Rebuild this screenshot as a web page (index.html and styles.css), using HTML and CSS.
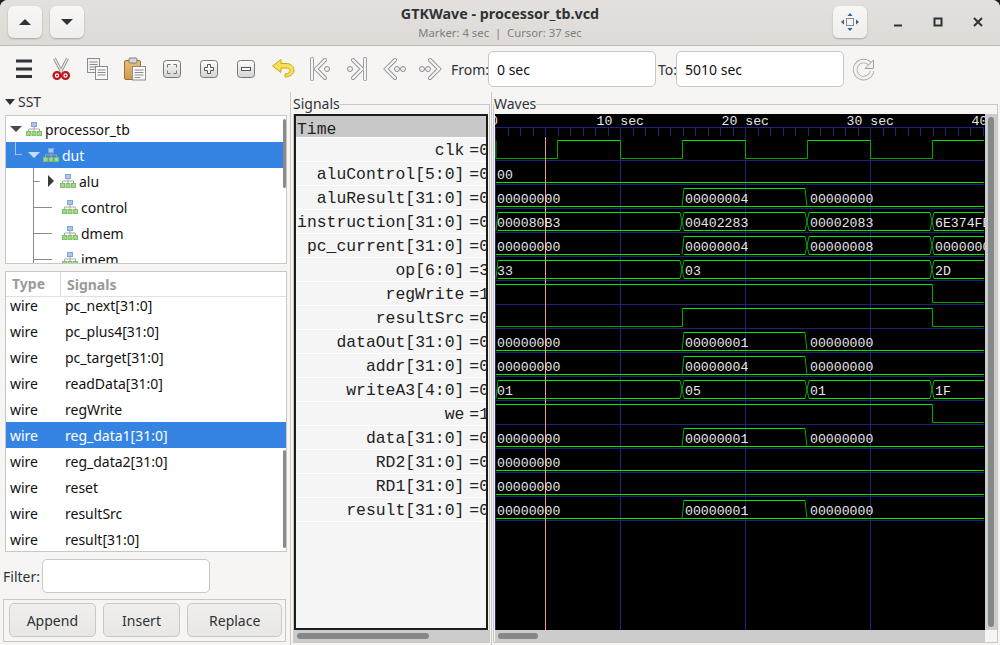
FILE: index.html
```html
<!DOCTYPE html>
<html lang="en">

<head>
  <meta charset="UTF-8">
  <meta name="viewport" content="width=device-width">
  <title>GTKWave - processor_tb.vcd</title>
  <link rel="stylesheet" href="styles.css">
</head>

<body>

  <svg class="defs" width="0" height="0">
    <symbol id="hier" viewBox="0 0 16 14">
      <path d="M8 4v3M2.5 10V7h11v3M8 7v3" fill="none" stroke="#a8a8a8"/>
      <rect x="5.5" y="0.5" width="5" height="4" fill="#a9c8ec" stroke="#7fa6d6"/>
      <rect x="0.5" y="9.5" width="4" height="4" fill="#a5d78e" stroke="#7fbf65"/>
      <rect x="6" y="9.5" width="4" height="4" fill="#a5d78e" stroke="#7fbf65"/>
      <rect x="11.5" y="9.5" width="4" height="4" fill="#a5d78e" stroke="#7fbf65"/>
    </symbol>
    <linearGradient id="btnface" x1="0" y1="0" x2="0" y2="1">
      <stop offset="0" stop-color="#fdfdfd"/>
      <stop offset="1" stop-color="#d4d4d2"/>
    </linearGradient>
    <linearGradient id="clip" x1="0" y1="0" x2="0" y2="1">
      <stop offset="0" stop-color="#e8bd78"/>
      <stop offset="1" stop-color="#d09a50"/>
    </linearGradient>
  </svg>

  <div class="window">

    <header class="headerbar">
      <div class="header-left">
        <button class="head-btn" type="button"><span class="tri-up"></span></button>
        <button class="head-btn" type="button"><span class="tri-down"></span></button>
      </div>
      <div class="title">
        <strong>GTKWave - processor_tb.vcd</strong>
        <span>Marker: 4 sec &nbsp;|&nbsp; Cursor: 37 sec</span>
      </div>
      <div class="header-right">
        <button class="head-btn move-btn" type="button">
          <svg width="18" height="18" viewBox="0 0 18 18">
            <rect x="5.5" y="5.5" width="7" height="7" fill="#f4f4f4" stroke="#8a8a8a"/>
            <path d="M9 0l2.5 3h-5zM9 18l2.5-3h-5zM0 9l3-2.5v5zM18 9l-3-2.5v5z" fill="#2f5f9e"/>
          </svg>
        </button>
        <span class="win-ctl">
          <svg width="12" height="12" viewBox="0 0 12 12"><path d="M2 9.5h8" stroke="#2e3436" stroke-width="2"/></svg>
        </span>
        <span class="win-ctl">
          <svg width="12" height="12" viewBox="0 0 12 12"><rect x="2.5" y="2.5" width="7" height="7" fill="none" stroke="#2e3436" stroke-width="2"/></svg>
        </span>
        <span class="win-ctl">
          <svg width="12" height="12" viewBox="0 0 12 12"><path d="M2 2l8 8M10 2l-8 8" stroke="#2e3436" stroke-width="2"/></svg>
        </span>
      </div>
    </header>

    <div class="toolbar">
      <span class="tool">
        <svg width="24" height="24" viewBox="0 0 24 24"><path d="M4 2.5h16v3H4zM4 10.5h16v3H4zM4 18h16v3H4z" fill="#2e3436"/></svg>
      </span>
      <span class="tool">
        <svg width="24" height="24" viewBox="0 0 24 24">
          <path d="M5.5 1.5L12.5 15M18.5 1.5L11.5 15" fill="none" stroke="#8f8f8f" stroke-width="3"/>
          <path d="M5.5 1.5L12.5 15M18.5 1.5L11.5 15" fill="none" stroke="#e6e6e6" stroke-width="1.4"/>
          <circle cx="8" cy="18.5" r="3.4" fill="#fff" stroke="#c4141c" stroke-width="2.4"/>
          <circle cx="16.5" cy="18.5" r="3.4" fill="#fff" stroke="#c4141c" stroke-width="2.4"/>
          <circle cx="8" cy="18.5" r="1" fill="#444"/>
          <circle cx="16.5" cy="18.5" r="1" fill="#444"/>
        </svg>
      </span>
      <span class="tool">
        <svg width="24" height="24" viewBox="0 0 24 24">
          <rect x="1.5" y="1.5" width="12" height="14" fill="#f2f2f2" stroke="#8c8c8c"/>
          <path d="M3.5 5h8M3.5 7.5h8M3.5 10h8M3.5 12.5h5" stroke="#8c8c8c"/>
          <rect x="9.5" y="9.5" width="12" height="13" fill="#f8f8f8" stroke="#8c8c8c"/>
          <path d="M11.5 13h8M11.5 15.5h8M11.5 18h8" stroke="#8c8c8c"/>
        </svg>
      </span>
      <span class="tool">
        <svg width="24" height="24" viewBox="0 0 24 24">
          <rect x="1.5" y="3.5" width="16" height="19" rx="1.5" fill="url(#clip)" stroke="#9c6f30"/>
          <rect x="6" y="1" width="8" height="5" rx="1" fill="#d8d8d8" stroke="#7e7e7e"/>
          <rect x="9.5" y="9.5" width="13" height="13.5" fill="#fafafa" stroke="#8c8c8c"/>
          <path d="M11.5 13h9M11.5 15.5h9M11.5 18h9M11.5 20.5h6" stroke="#8c8c8c"/>
        </svg>
      </span>
      <span class="tool">
        <svg width="24" height="24" viewBox="0 0 24 24">
          <rect x="3.5" y="3.5" width="17" height="17" rx="3" fill="url(#btnface)" stroke="#777"/>
          <path d="M7.500 10.500v-3h3M13.500 7.500h3v3M7.500 13.500v3h3M13.500 16.500h3v-3" fill="none" stroke="#777"/>
        </svg>
      </span>
      <span class="tool">
        <svg width="24" height="24" viewBox="0 0 24 24">
          <rect x="3.5" y="3.5" width="17" height="17" rx="3" fill="url(#btnface)" stroke="#777"/>
          <path d="M10.5 7.500h3v3h3v3h-3v3h-3v-3h-3v-3h3z" fill="#fafafa" stroke="#555"/>
        </svg>
      </span>
      <span class="tool">
        <svg width="24" height="24" viewBox="0 0 24 24">
          <rect x="3.5" y="3.5" width="17" height="17" rx="3" fill="url(#btnface)" stroke="#777"/>
          <rect x="7.5" y="10.5" width="9" height="3" fill="#fafafa" stroke="#555"/>
        </svg>
      </span>
      <span class="tool">
        <svg width="24" height="24" viewBox="0 0 24 24">
          <path d="M1.500 9L10 2.500V6.500H15C20 6.500 23 9.500 23 13C23 17 19 20 14 20V17C17 17 19 15.500 19 13.500C19 12 17.500 11 15 11H10V15.500Z" fill="#f6e05a" stroke="#c9a80e" stroke-linejoin="round"/>
        </svg>
      </span>
      <span class="tool">
        <svg width="24" height="24" viewBox="0 0 24 24">
          <path class="ch-out" d="M4 2v20M17 3l-9 9 9 9"/><path class="ch-in" d="M4 2v20M17 3l-9 9 9 9"/>
          <circle class="ch-dot" cx="19" cy="12" r="2.500"/>
        </svg>
      </span>
      <span class="tool">
        <svg width="24" height="24" viewBox="0 0 24 24">
          <path class="ch-out" d="M20 2v20M8 3l9 9-9 9"/><path class="ch-in" d="M20 2v20M8 3l9 9-9 9"/>
          <circle class="ch-dot" cx="5" cy="12" r="2.500"/>
        </svg>
      </span>
      <span class="tool">
        <svg width="24" height="24" viewBox="0 0 24 24">
          <path class="ch-out" d="M13 3l-9 9 9 9"/><path class="ch-in" d="M13 3l-9 9 9 9"/>
          <circle class="ch-dot" cx="15" cy="12" r="2.500"/><circle class="ch-dot" cx="21" cy="12" r="2.500"/>
        </svg>
      </span>
      <span class="tool">
        <svg width="24" height="24" viewBox="0 0 24 24">
          <path class="ch-out" d="M11 3l9 9-9 9"/><path class="ch-in" d="M11 3l9 9-9 9"/>
          <circle class="ch-dot" cx="3" cy="12" r="2.500"/><circle class="ch-dot" cx="9" cy="12" r="2.500"/>
        </svg>
      </span>
      <label class="range-label from-label">From:</label>
      <input class="range-input" type="text" value="0 sec">
      <label class="range-label to-label">To:</label>
      <input class="range-input" type="text" value="5010 sec">
      <span class="tool refresh">
        <svg width="24" height="24" viewBox="0 0 24 24">
          <path d="M18 7A8.500 8.500 0 1 0 20 14" fill="none" stroke="#a8a8a8" stroke-width="4.500"/>
          <path d="M18 7A8.500 8.500 0 1 0 20 14" fill="none" stroke="#f2f2f2" stroke-width="2.800"/>
          <path d="M21.500 3v8.500H13z" fill="#f2f2f2" stroke="#a0a0a0"/>
        </svg>
      </span>
    </div>

    <main class="panes">

      <section class="search-pane">
        <div class="sst-head"><span class="tri-down small"></span>SST</div>

        <div class="tree box">
          <div class="tree-row">
            <span class="tri-down tree-arrow"></span>
            <svg class="hier" width="16" height="14"><use href="#hier"/></svg>processor_tb
          </div>
          <div class="tree-row selected">
            <span class="elbow"></span>
            <span class="tri-down tree-arrow light"></span>
            <svg class="hier" width="16" height="14"><use href="#hier"/></svg>dut
          </div>
          <div class="tree-row">
            <span class="branch short"></span>
            <span class="tri-right"></span>
            <svg class="hier" width="16" height="14"><use href="#hier"/></svg>alu
          </div>
          <div class="tree-row">
            <span class="branch"></span>
            <svg class="hier" width="16" height="14"><use href="#hier"/></svg>control
          </div>
          <div class="tree-row">
            <span class="branch"></span>
            <svg class="hier" width="16" height="14"><use href="#hier"/></svg>dmem
          </div>
          <div class="tree-row">
            <span class="branch"></span>
            <svg class="hier" width="16" height="14"><use href="#hier"/></svg>imem
          </div>
          <span class="thumb tree-thumb"></span>
        </div>

        <div class="signal-list box">
          <div class="list-head">
            <span class="col-type">Type</span>
            <span class="col-name">Signals</span>
          </div>
          <div class="list-row first"><span class="col-type">wire</span><span class="col-name">pc_next[31:0]</span></div>
          <div class="list-row"><span class="col-type">wire</span><span class="col-name">pc_plus4[31:0]</span></div>
          <div class="list-row"><span class="col-type">wire</span><span class="col-name">pc_target[31:0]</span></div>
          <div class="list-row"><span class="col-type">wire</span><span class="col-name">readData[31:0]</span></div>
          <div class="list-row"><span class="col-type">wire</span><span class="col-name">regWrite</span></div>
          <div class="list-row selected"><span class="col-type">wire</span><span class="col-name">reg_data1[31:0]</span></div>
          <div class="list-row"><span class="col-type">wire</span><span class="col-name">reg_data2[31:0]</span></div>
          <div class="list-row"><span class="col-type">wire</span><span class="col-name">reset</span></div>
          <div class="list-row"><span class="col-type">wire</span><span class="col-name">resultSrc</span></div>
          <div class="list-row"><span class="col-type">wire</span><span class="col-name">result[31:0]</span></div>
          <span class="thumb list-thumb"></span>
        </div>

        <div class="filter-row">
          <label>Filter:</label>
          <input class="filter-input" type="text">
        </div>

        <div class="action-box">
          <button class="action append" type="button">Append</button>
          <button class="action insert" type="button">Insert</button>
          <button class="action replace" type="button">Replace</button>
        </div>
      </section>

      <section class="signals-pane">
        <fieldset class="frame signals-frame">
          <legend>Signals</legend>
          <div class="signal-names">
            <div class="name-list">
              <div class="name-row time">Time</div>
              <div class="name-row">clk<span class="name-val">=0</span></div>
              <div class="name-row">aluControl[5:0]<span class="name-val">=0</span></div>
              <div class="name-row">aluResult[31:0]<span class="name-val">=0</span></div>
              <div class="name-row">instruction[31:0]<span class="name-val">=0</span></div>
              <div class="name-row">pc_current[31:0]<span class="name-val">=0</span></div>
              <div class="name-row">op[6:0]<span class="name-val">=3</span></div>
              <div class="name-row">regWrite<span class="name-val">=1</span></div>
              <div class="name-row">resultSrc<span class="name-val">=0</span></div>
              <div class="name-row">dataOut[31:0]<span class="name-val">=0</span></div>
              <div class="name-row">addr[31:0]<span class="name-val">=0</span></div>
              <div class="name-row">writeA3[4:0]<span class="name-val">=0</span></div>
              <div class="name-row">we<span class="name-val">=1</span></div>
              <div class="name-row">data[31:0]<span class="name-val">=0</span></div>
              <div class="name-row">RD2[31:0]<span class="name-val">=0</span></div>
              <div class="name-row">RD1[31:0]<span class="name-val">=0</span></div>
              <div class="name-row">result[31:0]<span class="name-val">=0</span></div>
            </div>
          </div>
          <div class="hscroll"><span class="hthumb names-thumb"></span></div>
        </fieldset>
      </section>

      <section class="waves-pane">
        <fieldset class="frame waves-frame">
          <legend>Waves</legend>
          <div class="waves-top">
            <svg class="waves" width="490" height="516" viewBox="0 0 490 516">
              <defs>
                <g id="zero"><path class="vec" d="M1 44.500H489"/></g>
                <g id="pulse">
                  <path class="vec" d="M1 44.500H489M189 26.500H310"/>
                  <path class="trans" d="M187 44.500L189 26.500M312 44.500L310 26.500"/>
                </g>
                <g id="bus3">
                  <path class="vec" d="M3 26.500H185M189 26.500H310M314 26.500H435M439 26.500H489M3 44.500H185M189 44.500H310M314 44.500H435M439 44.500H489"/>
                  <path class="trans" d="M1 44.500L3 26.500M185 26.500L189 44.500M185 44.500L189 26.500M310 26.500L314 44.500M310 44.500L314 26.500M435 26.500L439 44.500M435 44.500L439 26.500"/>
                </g>
              </defs>

              <!-- ruler and grid -->
              <path class="grid ticks" d="M0 17.500H489"/>
              <path class="grid" d="M0 13.500H489M0.500 13V516M125.500 13V516M250.500 13V516M375.500 13V516"/>
              <path class="grid" d="M0 46.500H489M0 70.500H489M0 94.500H489M0 118.500H489M0 142.500H489M0 166.500H489M0 190.500H489M0 214.500H489M0 238.500H489M0 262.500H489M0 286.500H489M0 310.500H489M0 334.500H489M0 358.500H489M0 382.500H489M0 406.500H489"/>
              <text class="val" x="-5" y="11">0</text>
              <text class="val" x="101.500" y="11">10 sec</text>
              <text class="val" x="226.500" y="11">20 sec</text>
              <text class="val" x="351.500" y="11">30 sec</text>
              <text class="val" x="476.500" y="11">40 sec</text>

              <!-- clk -->
              <path class="bit-lo" d="M1 26.500V44.500H62.500V26.500M125.500 26.500V44.500H187.500V26.500M250.500 26.500V44.500H312.500V26.500M375.500 26.500V44.500H437.500V26.500"/>
              <path class="bit-hi" d="M62.500 26.500H125.500M187.500 26.500H250.500M312.500 26.500H375.500M437.500 26.500H489"/>

              <g transform="translate(0 24)"><use href="#zero"/></g>
              <g transform="translate(0 48)"><use href="#pulse"/></g>
              <g transform="translate(0 72)"><use href="#bus3"/></g>
              <g transform="translate(0 96)">
                <path class="vec" d="M1 44.500H185M189 44.500H310M314 44.500H435M439 44.500H489M189 26.500H310M314 26.500H435M439 26.500H489"/>
                <path class="trans" d="M187 44.500L189 26.500M310 26.500L314 44.500M310 44.500L314 26.500M435 26.500L439 44.500M435 44.500L439 26.500"/>
              </g>
              <g transform="translate(0 120)">
                <path class="vec" d="M3 26.500H185M189 26.500H435M439 26.500H489M3 44.500H185M189 44.500H435M439 44.500H489"/>
                <path class="trans" d="M1 44.500L3 26.500M185 26.500L189 44.500M185 44.500L189 26.500M435 26.500L439 44.500M435 44.500L439 26.500"/>
              </g>
              <g transform="translate(0 144)">
                <path class="bit-hi" d="M1 26.500H437.500"/>
                <path class="bit-lo" d="M437.500 26.500V44.500H489"/>
              </g>
              <g transform="translate(0 168)">
                <path class="bit-lo" d="M1 44.500H187.500V26.500M437.500 26.500V44.500H489"/>
                <path class="bit-hi" d="M187.500 26.500H437.500"/>
              </g>
              <g transform="translate(0 192)"><use href="#pulse"/></g>
              <g transform="translate(0 216)"><use href="#pulse"/></g>
              <g transform="translate(0 240)"><use href="#bus3"/></g>
              <g transform="translate(0 264)">
                <path class="bit-hi" d="M1 26.500H437.500"/>
                <path class="bit-lo" d="M437.500 26.500V44.500H489"/>
              </g>
              <g transform="translate(0 288)"><use href="#pulse"/></g>
              <g transform="translate(0 312)"><use href="#zero"/></g>
              <g transform="translate(0 336)"><use href="#zero"/></g>
              <g transform="translate(0 360)"><use href="#pulse"/></g>

              <!-- marker -->
              <path class="marker" d="M50.500 23V516"/>

              <g transform="translate(0 24)"><text class="val" x="2" y="41">00</text></g>
              <g transform="translate(0 48)">
                <text class="val" x="2" y="41">00000000</text><text class="val" x="190" y="41">00000004</text><text class="val" x="315" y="41">00000000</text>
              </g>
              <g transform="translate(0 72)">
                <text class="val" x="2" y="41">000080B3</text><text class="val" x="190" y="41">00402283</text><text class="val" x="315" y="41">00002083</text><text class="val" x="440" y="41">6E374FE3</text>
              </g>
              <g transform="translate(0 96)">
                <text class="val" x="2" y="41">00000000</text><text class="val" x="190" y="41">00000004</text><text class="val" x="315" y="41">00000008</text><text class="val" x="440" y="41">0000000C</text>
              </g>
              <g transform="translate(0 120)">
                <text class="val" x="2" y="41">33</text><text class="val" x="190" y="41">03</text><text class="val" x="440" y="41">2D</text>
              </g>
              <g transform="translate(0 192)">
                <text class="val" x="2" y="41">00000000</text><text class="val" x="190" y="41">00000001</text><text class="val" x="315" y="41">00000000</text>
              </g>
              <g transform="translate(0 216)">
                <text class="val" x="2" y="41">00000000</text><text class="val" x="190" y="41">00000004</text><text class="val" x="315" y="41">00000000</text>
              </g>
              <g transform="translate(0 240)">
                <text class="val" x="2" y="41">01</text><text class="val" x="190" y="41">05</text><text class="val" x="315" y="41">01</text><text class="val" x="440" y="41">1F</text>
              </g>
              <g transform="translate(0 288)">
                <text class="val" x="2" y="41">00000000</text><text class="val" x="190" y="41">00000001</text><text class="val" x="315" y="41">00000000</text>
              </g>
              <g transform="translate(0 312)"><text class="val" x="2" y="41">00000000</text></g>
              <g transform="translate(0 336)"><text class="val" x="2" y="41">00000000</text></g>
              <g transform="translate(0 360)">
                <text class="val" x="2" y="41">00000000</text><text class="val" x="190" y="41">00000001</text><text class="val" x="315" y="41">00000000</text>
              </g>
            </svg>
            <div class="vscroll"><span class="vthumb"></span></div>
          </div>
          <div class="waves-bottom">
            <div class="hscroll wave-hscroll"><span class="hthumb waves-thumb"></span></div>
            <span class="corner"></span>
          </div>
        </fieldset>
      </section>

    </main>
  </div>

</body>

</html>
```

FILE: styles.css
```css
* {
  box-sizing: border-box;
  margin: 0;
  padding: 0;
}

html,
body {
  height: 100%;
  overflow: hidden;
}

body {
  font-family: "Noto Sans", sans-serif;
  font-size: 14px;
  color: #2e3436;
  background-color: #202020;
}

.defs {
  position: absolute;
}

.window {
  display: flex;
  flex-direction: column;
  height: 645px;
  background-color: #f6f5f4;
  border-radius: 8px 8px 0 0;
  overflow: hidden;
}

/* header bar */

.headerbar {
  display: grid;
  grid-template-columns: 1fr auto 1fr;
  align-items: center;
  height: 46px;
  padding-bottom: 1px;
  background: linear-gradient(#e3e0dd, #dedbd7);
  border-bottom: 1px solid #bfbab4;
}

.header-left {
  display: flex;
  gap: 8px;
  padding-left: 8px;
}

.header-right {
  display: flex;
  align-items: center;
  justify-content: flex-end;
  padding-right: 2px;
}

.head-btn {
  display: flex;
  align-items: center;
  justify-content: center;
  width: 34px;
  height: 32px;
  border: none;
  border-radius: 6px;
  background: linear-gradient(#f8f7f6, #f0eeec);
  box-shadow: 0 1px 2px rgba(0, 0, 0, 0.25);
}

.move-btn {
  margin-right: 11px;
}

.win-ctl {
  display: flex;
  align-items: center;
  justify-content: center;
  width: 40px;
  height: 32px;
}

.title {
  display: flex;
  flex-direction: column;
  align-items: center;
  padding-top: 2px;
  line-height: 19px;
}

.title strong {
  font-size: 14.3px;
  font-weight: 700;
  color: #2e3436;
}

.title span {
  font-size: 11.3px;
  color: #7d7f7c;
}

.tri-up {
  width: 0;
  height: 0;
  border-left: 6px solid transparent;
  border-right: 6px solid transparent;
  border-bottom: 6px solid #2e3436;
}

.tri-down {
  display: inline-block;
  width: 0;
  height: 0;
  border-left: 6px solid transparent;
  border-right: 6px solid transparent;
  border-top: 6px solid #2e3436;
}

.tri-down.small {
  border-left-width: 5px;
  border-right-width: 5px;
  border-top-width: 6px;
  margin-right: 3px;
}

.tri-right {
  width: 0;
  height: 0;
  margin: 0 6px 0 6px;
  border-top: 6px solid transparent;
  border-bottom: 6px solid transparent;
  border-left: 6px solid #3a3a3a;
}

/* toolbar */

.toolbar {
  display: flex;
  align-items: center;
  height: 46px;
  padding-left: 12px;
}

.tool {
  display: flex;
  width: 24px;
  height: 24px;
  margin-right: 13px;
}

.ch-out {
  fill: none;
  stroke: #8e8e8e;
  stroke-width: 4;
  stroke-linecap: round;
}

.ch-in {
  fill: none;
  stroke: #f4f4f4;
  stroke-width: 2.4;
  stroke-linecap: round;
}

.ch-dot {
  fill: #f0f0f0;
  stroke: #8e8e8e;
}

.range-label {
  color: #2e3436;
}

.from-label {
  margin-left: -5px;
  width: 37px;
}

.to-label {
  margin-left: 2px;
  width: 18px;
}

.range-input {
  height: 36px;
  width: 168px;
  padding: 0 8px;
  font: inherit;
  color: #111;
  background-color: #fff;
  border: 1px solid #cdc7c2;
  border-radius: 5px;
}

.refresh {
  margin-left: 8px;
}

/* panes */

.panes {
  display: flex;
  flex: 1;
  min-height: 0;
}

.search-pane {
  display: flex;
  flex-direction: column;
  width: 291px;
  padding: 0 4px 0 3px;
  border-right: 1px solid #cbc8c3;
}

.sst-head {
  display: flex;
  align-items: center;
  height: 23px;
  padding-left: 2px;
  padding-bottom: 4px;
}

.box {
  position: relative;
  margin: 0 0 0 2px;
  width: 282px;
  background-color: #fff;
  border: 1px solid #cbc8c3;
  overflow: hidden;
}

.selected {
  color: #fff;
  background-color: #3584e4;
}

.thumb {
  position: absolute;
  right: 0;
  width: 3px;
  background-color: #8a8a8a;
  border-radius: 2px;
}

/* hierarchy tree */

.tree {
  height: 149px;
}

.tree-row {
  display: flex;
  align-items: center;
  height: 26px;
  color: #111;
}

.tree-row.selected {
  color: #fff;
}

.tree-row:first-child {
  padding-left: 4px;
}

.hier {
  flex: none;
  margin-right: 3px;
}

.tree-arrow {
  margin-right: 4px;
  border-top-color: #4a4a4a;
}

.tree-arrow.light {
  border-top-color: #c8ddf6;
  margin-right: 3px;
}

.elbow {
  align-self: flex-start;
  width: 7px;
  height: 13px;
  margin-left: 9px;
  margin-right: 6px;
  border-left: 1px solid #a9c8ee;
  border-bottom: 1px solid #a9c8ee;
}

.branch {
  align-self: stretch;
  width: 19px;
  margin-left: 27px;
  margin-right: 10px;
  border-left: 1px solid #8c8c8c;
  background: linear-gradient(#8c8c8c, #8c8c8c) left center / 100% 1px no-repeat;
}

.branch.short {
  width: 9px;
  margin-right: 0;
  background-size: 70% 1px;
}

.tree-thumb {
  top: 3px;
  height: 69px;
}

/* signal list */

.signal-list {
  height: 281px;
  margin-top: 7px;
}

.list-head {
  display: flex;
  align-items: center;
  height: 25px;
  font-weight: 700;
  color: #9a9a9a;
  border-bottom: 1px solid #e2e0de;
}

.list-head .col-type {
  padding-left: 6px;
  border-right: 1px solid #dedcd9;
  line-height: 24px;
}

.list-row {
  display: flex;
  align-items: center;
  height: 26px;
  color: #111;
}

.list-row.first {
  height: 21px;
  padding-bottom: 4px;
}

.list-row.selected {
  color: #fff;
}

.col-type {
  width: 55px;
  padding-left: 4px;
}

.col-name {
  padding-left: 4px;
}

.list-head .col-name {
  padding-left: 6px;
}

.list-thumb {
  top: 178px;
  height: 98px;
}

/* filter and buttons */

.filter-row {
  display: flex;
  align-items: center;
  height: 34px;
  margin-top: 7px;
  color: #2e3436;
}

.filter-row label {
  width: 39px;
}

.filter-input {
  width: 168px;
  height: 34px;
  background-color: #fff;
  border: 1px solid #cdc7c2;
  border-radius: 5px;
}

.action-box {
  display: flex;
  gap: 7px;
  height: 43px;
  margin-top: 6px;
  padding: 3px 3px 0 5px;
  border: 1px solid #cbc8c3;
}

.action {
  height: 34px;
  font: inherit;
  color: #2e3436;
  background: linear-gradient(#f1efed, #e9e7e4);
  border: 1px solid #cdc7c2;
  border-radius: 5px;
}

.append {
  width: 87px;
}

.insert {
  width: 78px;
}

.replace {
  width: 95px;
}

/* framed panes */

.frame {
  border: 1px solid #cbc8c3;
  margin-top: 2px;
  height: 549px;
}

.frame legend {
  padding: 0;
  margin-left: -1px;
  line-height: 20px;
  color: #2e3436;
}

.signals-pane {
  width: 201px;
  padding-left: 2px;
  border-right: 1px solid #cbc8c3;
}

.signals-frame {
  width: 197px;
}

.waves-pane {
  flex: 1;
  padding-left: 1px;
}

.waves-frame {
  width: 504px;
}

.waves-frame legend {
  margin-left: 0;
}

.signal-names {
  width: 194px;
  height: 516px;
  background-color: #f5f5f5;
  border: 2px solid #1c1c1c;
  overflow: hidden;
}

.name-list {
  width: 193px;
}

.name-row {
  display: flex;
  justify-content: flex-end;
  height: 24px;
  padding-top: 2px;
  font-family: "Liberation Mono", monospace;
  font-size: 16.4px;
  line-height: 21px;
  color: #222;
  white-space: pre;
  border-bottom: 1px solid #fff;
}

.name-val {
  margin-left: 5px;
}

.name-row.time {
  justify-content: flex-start;
  height: 22px;
  padding-top: 3px;
  padding-left: 1px;
  line-height: 22px;
  background-color: #c8c8c8;
}

.hscroll {
  display: flex;
  align-items: center;
  height: 12px;
  background-color: #cccccc;
}

.hthumb {
  height: 6px;
  margin-left: 3px;
  background-color: #858888;
  border-radius: 3px;
}

.names-thumb {
  width: 132px;
}

.waves-thumb {
  width: 40px;
}

/* waves */

.waves-top {
  display: flex;
  padding-left: 1px;
}

.waves {
  display: block;
  flex: none;
  background-color: #000;
}

.waves text {
  font-family: "Liberation Mono", monospace;
  font-size: 13.2px;
}

.vscroll {
  flex: none;
  width: 12px;
  height: 516px;
  padding: 3px 0 3px 3px;
  background-color: #cccccc;
}

.vthumb {
  display: block;
  width: 6px;
  height: 510px;
  background-color: #858888;
  border-radius: 3px;
}

.waves-bottom {
  display: flex;
  padding-left: 1px;
}

.wave-hscroll {
  width: 490px;
}

.corner {
  width: 12px;
  height: 12px;
  background-color: #f6f5f4;
}

.grid {
  fill: none;
  stroke: #22227a;
  shape-rendering: crispEdges;
}

.ticks {
  stroke-width: 9;
  stroke-dasharray: 1 11.5;
}

.vec,
.bit-hi {
  fill: none;
  stroke: #00e800;
  stroke-width: 1.15;
}

.bit-lo,
.trans {
  fill: none;
  stroke: #00a800;
}

.marker {
  stroke: #e89a9a;
  shape-rendering: crispEdges;
}

.val {
  fill: #e6e6e6;
}
```
